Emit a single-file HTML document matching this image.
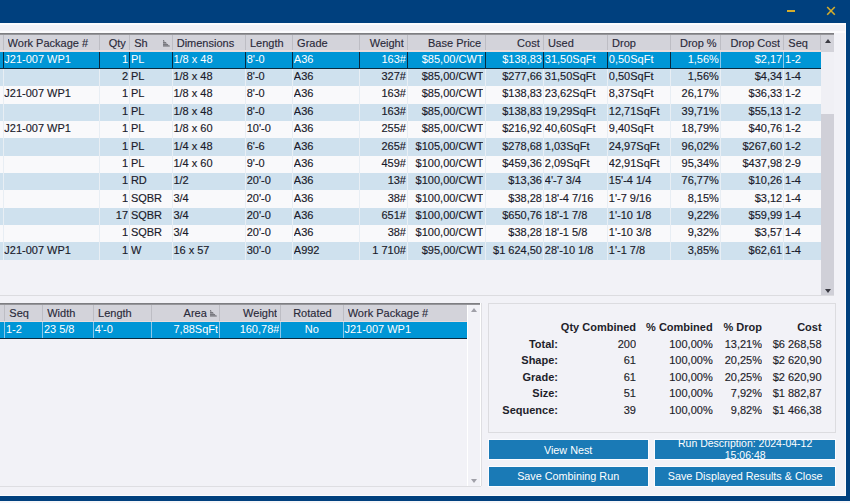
<!DOCTYPE html>
<html><head><meta charset="utf-8"><style>
html,body{margin:0;padding:0;}
body{width:850px;height:503px;position:relative;overflow:hidden;background:#f2f2f7;font-family:"Liberation Sans", sans-serif;}
.t{position:absolute;font-size:11px;line-height:14px;white-space:nowrap;overflow:hidden;-webkit-text-stroke:0.15px currentColor;}
.btn{position:absolute;background:#1a7ab6;color:#fff;font-size:10.8px;box-shadow:0 0 0 1px #fcfcff;text-align:center;overflow:hidden;box-sizing:border-box;}
</style></head><body>
<div style="position:absolute;left:0px;top:33px;width:834.3px;height:1px;background:#7e7e82"></div>
<div style="position:absolute;left:0px;top:34px;width:834.3px;height:1px;background:#959599"></div>
<div style="position:absolute;left:0px;top:35px;width:820.6px;height:16.6px;background:#d3d3da"></div>
<div style="position:absolute;left:0px;top:50.2px;width:820.6px;height:1.4px;background:#e8dcdc"></div>
<div style="position:absolute;left:2.5px;top:35px;width:1px;height:15.2px;background:#bdbdc4"></div>
<div style="position:absolute;left:98.9px;top:35px;width:1px;height:15.2px;background:#bdbdc4"></div>
<div style="position:absolute;left:129.1px;top:35px;width:1px;height:15.2px;background:#bdbdc4"></div>
<div style="position:absolute;left:171.6px;top:35px;width:1px;height:15.2px;background:#bdbdc4"></div>
<div style="position:absolute;left:244.9px;top:35px;width:1px;height:15.2px;background:#bdbdc4"></div>
<div style="position:absolute;left:292px;top:35px;width:1px;height:15.2px;background:#bdbdc4"></div>
<div style="position:absolute;left:358.9px;top:35px;width:1px;height:15.2px;background:#bdbdc4"></div>
<div style="position:absolute;left:407px;top:35px;width:1px;height:15.2px;background:#bdbdc4"></div>
<div style="position:absolute;left:484.5px;top:35px;width:1px;height:15.2px;background:#bdbdc4"></div>
<div style="position:absolute;left:543px;top:35px;width:1px;height:15.2px;background:#bdbdc4"></div>
<div style="position:absolute;left:607px;top:35px;width:1px;height:15.2px;background:#bdbdc4"></div>
<div style="position:absolute;left:669.9px;top:35px;width:1px;height:15.2px;background:#bdbdc4"></div>
<div style="position:absolute;left:719.9px;top:35px;width:1px;height:15.2px;background:#bdbdc4"></div>
<div style="position:absolute;left:783.25px;top:35px;width:1px;height:15.2px;background:#bdbdc4"></div>
<div style="position:absolute;left:820.1px;top:35px;width:1px;height:15.2px;background:#bdbdc4"></div>
<div class="t" style="left:-5.4px;top:35.9px;width:4.65px;text-align:left;color:#2a2a3a"></div>
<div class="t" style="left:7.6px;top:35.9px;width:88.05px;text-align:left;color:#2a2a3a">Work Package #</div>
<div class="t" style="left:104px;top:35.9px;width:21.85px;text-align:right;color:#2a2a3a">Qty</div>
<div class="t" style="left:134.2px;top:35.9px;width:34.15px;text-align:left;color:#2a2a3a">Sh</div>
<div class="t" style="left:176.7px;top:35.9px;width:64.95px;text-align:left;color:#2a2a3a">Dimensions</div>
<div class="t" style="left:250px;top:35.9px;width:38.75px;text-align:left;color:#2a2a3a">Length</div>
<div class="t" style="left:297.1px;top:35.9px;width:58.55px;text-align:left;color:#2a2a3a">Grade</div>
<div class="t" style="left:364px;top:35.9px;width:39.75px;text-align:right;color:#2a2a3a">Weight</div>
<div class="t" style="left:412.1px;top:35.9px;width:69.15px;text-align:right;color:#2a2a3a">Base Price</div>
<div class="t" style="left:489.6px;top:35.9px;width:50.15px;text-align:right;color:#2a2a3a">Cost</div>
<div class="t" style="left:548.1px;top:35.9px;width:55.65px;text-align:left;color:#2a2a3a">Used</div>
<div class="t" style="left:612.1px;top:35.9px;width:54.55px;text-align:left;color:#2a2a3a">Drop</div>
<div class="t" style="left:675px;top:35.9px;width:41.65px;text-align:right;color:#2a2a3a">Drop %</div>
<div class="t" style="left:725px;top:35.9px;width:55px;text-align:right;color:#2a2a3a">Drop Cost</div>
<div class="t" style="left:788.35px;top:35.9px;width:28.5px;text-align:left;color:#2a2a3a">Seq</div>
<div style="position:absolute;left:0px;top:51.6px;width:820.6px;height:17.34px;background:#0096d6"></div>
<div style="position:absolute;left:2.5px;top:51.6px;width:1px;height:17.34px;background:#0a2a40"></div>
<div style="position:absolute;left:98.9px;top:51.6px;width:1px;height:17.34px;background:#0a2a40"></div>
<div style="position:absolute;left:129.1px;top:51.6px;width:1px;height:17.34px;background:#0a2a40"></div>
<div style="position:absolute;left:171.6px;top:51.6px;width:1px;height:17.34px;background:#0a2a40"></div>
<div style="position:absolute;left:244.9px;top:51.6px;width:1px;height:17.34px;background:#0a2a40"></div>
<div style="position:absolute;left:292px;top:51.6px;width:1px;height:17.34px;background:#0a2a40"></div>
<div style="position:absolute;left:358.9px;top:51.6px;width:1px;height:17.34px;background:#0a2a40"></div>
<div style="position:absolute;left:407px;top:51.6px;width:1px;height:17.34px;background:#0a2a40"></div>
<div style="position:absolute;left:484.5px;top:51.6px;width:1px;height:17.34px;background:#0a2a40"></div>
<div style="position:absolute;left:543px;top:51.6px;width:1px;height:17.34px;background:#0a2a40"></div>
<div style="position:absolute;left:607px;top:51.6px;width:1px;height:17.34px;background:#0a2a40"></div>
<div style="position:absolute;left:669.9px;top:51.6px;width:1px;height:17.34px;background:#0a2a40"></div>
<div style="position:absolute;left:719.9px;top:51.6px;width:1px;height:17.34px;background:#8cc8ea"></div>
<div style="position:absolute;left:783.25px;top:51.6px;width:1px;height:17.34px;background:#8cc8ea"></div>
<div style="position:absolute;left:0px;top:67.54px;width:820.6px;height:1.4px;background:#0a2a40"></div>
<div class="t" style="left:4.3px;top:51.8px;width:93.6px;text-align:left;color:#ffffff;-webkit-text-stroke:0">J21-007 WP1</div>
<div class="t" style="left:100.7px;top:51.8px;width:27.4px;text-align:right;color:#ffffff;-webkit-text-stroke:0">1</div>
<div class="t" style="left:130.9px;top:51.8px;width:39.7px;text-align:left;color:#ffffff;-webkit-text-stroke:0">PL</div>
<div class="t" style="left:173.4px;top:51.8px;width:70.5px;text-align:left;color:#ffffff;-webkit-text-stroke:0">1/8 x 48</div>
<div class="t" style="left:246.7px;top:51.8px;width:44.3px;text-align:left;color:#ffffff;-webkit-text-stroke:0">8'-0</div>
<div class="t" style="left:293.8px;top:51.8px;width:64.1px;text-align:left;color:#ffffff;-webkit-text-stroke:0">A36</div>
<div class="t" style="left:360.7px;top:51.8px;width:45.3px;text-align:right;color:#ffffff;-webkit-text-stroke:0">163#</div>
<div class="t" style="left:408.8px;top:51.8px;width:74.7px;text-align:right;color:#ffffff;-webkit-text-stroke:0">$85,00/CWT</div>
<div class="t" style="left:486.3px;top:51.8px;width:55.7px;text-align:right;color:#ffffff;-webkit-text-stroke:0">$138,83</div>
<div class="t" style="left:544.8px;top:51.8px;width:61.2px;text-align:left;color:#ffffff;-webkit-text-stroke:0">31,50SqFt</div>
<div class="t" style="left:608.8px;top:51.8px;width:60.1px;text-align:left;color:#ffffff;-webkit-text-stroke:0">0,50SqFt</div>
<div class="t" style="left:671.7px;top:51.8px;width:47.2px;text-align:right;color:#ffffff;-webkit-text-stroke:0">1,56%</div>
<div class="t" style="left:721.7px;top:51.8px;width:60.55px;text-align:right;color:#ffffff;-webkit-text-stroke:0">$2,17</div>
<div class="t" style="left:785.05px;top:51.8px;width:34.05px;text-align:left;color:#ffffff;-webkit-text-stroke:0">1-2</div>
<div style="position:absolute;left:0px;top:68.94px;width:820.6px;height:17.34px;background:#cfe1ee"></div>
<div style="position:absolute;left:2.5px;top:68.94px;width:1px;height:17.34px;background:#e8eef4"></div>
<div style="position:absolute;left:98.9px;top:68.94px;width:1px;height:17.34px;background:#e8eef4"></div>
<div style="position:absolute;left:129.1px;top:68.94px;width:1px;height:17.34px;background:#e8eef4"></div>
<div style="position:absolute;left:171.6px;top:68.94px;width:1px;height:17.34px;background:#e8eef4"></div>
<div style="position:absolute;left:244.9px;top:68.94px;width:1px;height:17.34px;background:#e8eef4"></div>
<div style="position:absolute;left:292px;top:68.94px;width:1px;height:17.34px;background:#e8eef4"></div>
<div style="position:absolute;left:358.9px;top:68.94px;width:1px;height:17.34px;background:#e8eef4"></div>
<div style="position:absolute;left:407px;top:68.94px;width:1px;height:17.34px;background:#e8eef4"></div>
<div style="position:absolute;left:484.5px;top:68.94px;width:1px;height:17.34px;background:#e8eef4"></div>
<div style="position:absolute;left:543px;top:68.94px;width:1px;height:17.34px;background:#e8eef4"></div>
<div style="position:absolute;left:607px;top:68.94px;width:1px;height:17.34px;background:#e8eef4"></div>
<div style="position:absolute;left:669.9px;top:68.94px;width:1px;height:17.34px;background:#e8eef4"></div>
<div style="position:absolute;left:719.9px;top:68.94px;width:1px;height:17.34px;background:#e8eef4"></div>
<div style="position:absolute;left:783.25px;top:68.94px;width:1px;height:17.34px;background:#e8eef4"></div>
<div class="t" style="left:100.7px;top:69.14px;width:27.4px;text-align:right;color:#1a1a2a">2</div>
<div class="t" style="left:130.9px;top:69.14px;width:39.7px;text-align:left;color:#1a1a2a">PL</div>
<div class="t" style="left:173.4px;top:69.14px;width:70.5px;text-align:left;color:#1a1a2a">1/8 x 48</div>
<div class="t" style="left:246.7px;top:69.14px;width:44.3px;text-align:left;color:#1a1a2a">8'-0</div>
<div class="t" style="left:293.8px;top:69.14px;width:64.1px;text-align:left;color:#1a1a2a">A36</div>
<div class="t" style="left:360.7px;top:69.14px;width:45.3px;text-align:right;color:#1a1a2a">327#</div>
<div class="t" style="left:408.8px;top:69.14px;width:74.7px;text-align:right;color:#1a1a2a">$85,00/CWT</div>
<div class="t" style="left:486.3px;top:69.14px;width:55.7px;text-align:right;color:#1a1a2a">$277,66</div>
<div class="t" style="left:544.8px;top:69.14px;width:61.2px;text-align:left;color:#1a1a2a">31,50SqFt</div>
<div class="t" style="left:608.8px;top:69.14px;width:60.1px;text-align:left;color:#1a1a2a">0,50SqFt</div>
<div class="t" style="left:671.7px;top:69.14px;width:47.2px;text-align:right;color:#1a1a2a">1,56%</div>
<div class="t" style="left:721.7px;top:69.14px;width:60.55px;text-align:right;color:#1a1a2a">$4,34</div>
<div class="t" style="left:785.05px;top:69.14px;width:34.05px;text-align:left;color:#1a1a2a">1-4</div>
<div style="position:absolute;left:0px;top:86.28px;width:820.6px;height:17.34px;background:#f9f9fb"></div>
<div style="position:absolute;left:2.5px;top:86.28px;width:1px;height:17.34px;background:#e8eef4"></div>
<div style="position:absolute;left:98.9px;top:86.28px;width:1px;height:17.34px;background:#e8eef4"></div>
<div style="position:absolute;left:129.1px;top:86.28px;width:1px;height:17.34px;background:#e8eef4"></div>
<div style="position:absolute;left:171.6px;top:86.28px;width:1px;height:17.34px;background:#e8eef4"></div>
<div style="position:absolute;left:244.9px;top:86.28px;width:1px;height:17.34px;background:#e8eef4"></div>
<div style="position:absolute;left:292px;top:86.28px;width:1px;height:17.34px;background:#e8eef4"></div>
<div style="position:absolute;left:358.9px;top:86.28px;width:1px;height:17.34px;background:#e8eef4"></div>
<div style="position:absolute;left:407px;top:86.28px;width:1px;height:17.34px;background:#e8eef4"></div>
<div style="position:absolute;left:484.5px;top:86.28px;width:1px;height:17.34px;background:#e8eef4"></div>
<div style="position:absolute;left:543px;top:86.28px;width:1px;height:17.34px;background:#e8eef4"></div>
<div style="position:absolute;left:607px;top:86.28px;width:1px;height:17.34px;background:#e8eef4"></div>
<div style="position:absolute;left:669.9px;top:86.28px;width:1px;height:17.34px;background:#e8eef4"></div>
<div style="position:absolute;left:719.9px;top:86.28px;width:1px;height:17.34px;background:#e8eef4"></div>
<div style="position:absolute;left:783.25px;top:86.28px;width:1px;height:17.34px;background:#e8eef4"></div>
<div class="t" style="left:4.3px;top:86.48px;width:93.6px;text-align:left;color:#1a1a2a">J21-007 WP1</div>
<div class="t" style="left:100.7px;top:86.48px;width:27.4px;text-align:right;color:#1a1a2a">1</div>
<div class="t" style="left:130.9px;top:86.48px;width:39.7px;text-align:left;color:#1a1a2a">PL</div>
<div class="t" style="left:173.4px;top:86.48px;width:70.5px;text-align:left;color:#1a1a2a">1/8 x 48</div>
<div class="t" style="left:246.7px;top:86.48px;width:44.3px;text-align:left;color:#1a1a2a">8'-0</div>
<div class="t" style="left:293.8px;top:86.48px;width:64.1px;text-align:left;color:#1a1a2a">A36</div>
<div class="t" style="left:360.7px;top:86.48px;width:45.3px;text-align:right;color:#1a1a2a">163#</div>
<div class="t" style="left:408.8px;top:86.48px;width:74.7px;text-align:right;color:#1a1a2a">$85,00/CWT</div>
<div class="t" style="left:486.3px;top:86.48px;width:55.7px;text-align:right;color:#1a1a2a">$138,83</div>
<div class="t" style="left:544.8px;top:86.48px;width:61.2px;text-align:left;color:#1a1a2a">23,62SqFt</div>
<div class="t" style="left:608.8px;top:86.48px;width:60.1px;text-align:left;color:#1a1a2a">8,37SqFt</div>
<div class="t" style="left:671.7px;top:86.48px;width:47.2px;text-align:right;color:#1a1a2a">26,17%</div>
<div class="t" style="left:721.7px;top:86.48px;width:60.55px;text-align:right;color:#1a1a2a">$36,33</div>
<div class="t" style="left:785.05px;top:86.48px;width:34.05px;text-align:left;color:#1a1a2a">1-2</div>
<div style="position:absolute;left:0px;top:103.62px;width:820.6px;height:17.34px;background:#cfe1ee"></div>
<div style="position:absolute;left:2.5px;top:103.62px;width:1px;height:17.34px;background:#e8eef4"></div>
<div style="position:absolute;left:98.9px;top:103.62px;width:1px;height:17.34px;background:#e8eef4"></div>
<div style="position:absolute;left:129.1px;top:103.62px;width:1px;height:17.34px;background:#e8eef4"></div>
<div style="position:absolute;left:171.6px;top:103.62px;width:1px;height:17.34px;background:#e8eef4"></div>
<div style="position:absolute;left:244.9px;top:103.62px;width:1px;height:17.34px;background:#e8eef4"></div>
<div style="position:absolute;left:292px;top:103.62px;width:1px;height:17.34px;background:#e8eef4"></div>
<div style="position:absolute;left:358.9px;top:103.62px;width:1px;height:17.34px;background:#e8eef4"></div>
<div style="position:absolute;left:407px;top:103.62px;width:1px;height:17.34px;background:#e8eef4"></div>
<div style="position:absolute;left:484.5px;top:103.62px;width:1px;height:17.34px;background:#e8eef4"></div>
<div style="position:absolute;left:543px;top:103.62px;width:1px;height:17.34px;background:#e8eef4"></div>
<div style="position:absolute;left:607px;top:103.62px;width:1px;height:17.34px;background:#e8eef4"></div>
<div style="position:absolute;left:669.9px;top:103.62px;width:1px;height:17.34px;background:#e8eef4"></div>
<div style="position:absolute;left:719.9px;top:103.62px;width:1px;height:17.34px;background:#e8eef4"></div>
<div style="position:absolute;left:783.25px;top:103.62px;width:1px;height:17.34px;background:#e8eef4"></div>
<div class="t" style="left:100.7px;top:103.82px;width:27.4px;text-align:right;color:#1a1a2a">1</div>
<div class="t" style="left:130.9px;top:103.82px;width:39.7px;text-align:left;color:#1a1a2a">PL</div>
<div class="t" style="left:173.4px;top:103.82px;width:70.5px;text-align:left;color:#1a1a2a">1/8 x 48</div>
<div class="t" style="left:246.7px;top:103.82px;width:44.3px;text-align:left;color:#1a1a2a">8'-0</div>
<div class="t" style="left:293.8px;top:103.82px;width:64.1px;text-align:left;color:#1a1a2a">A36</div>
<div class="t" style="left:360.7px;top:103.82px;width:45.3px;text-align:right;color:#1a1a2a">163#</div>
<div class="t" style="left:408.8px;top:103.82px;width:74.7px;text-align:right;color:#1a1a2a">$85,00/CWT</div>
<div class="t" style="left:486.3px;top:103.82px;width:55.7px;text-align:right;color:#1a1a2a">$138,83</div>
<div class="t" style="left:544.8px;top:103.82px;width:61.2px;text-align:left;color:#1a1a2a">19,29SqFt</div>
<div class="t" style="left:608.8px;top:103.82px;width:60.1px;text-align:left;color:#1a1a2a">12,71SqFt</div>
<div class="t" style="left:671.7px;top:103.82px;width:47.2px;text-align:right;color:#1a1a2a">39,71%</div>
<div class="t" style="left:721.7px;top:103.82px;width:60.55px;text-align:right;color:#1a1a2a">$55,13</div>
<div class="t" style="left:785.05px;top:103.82px;width:34.05px;text-align:left;color:#1a1a2a">1-2</div>
<div style="position:absolute;left:0px;top:120.96px;width:820.6px;height:17.34px;background:#f9f9fb"></div>
<div style="position:absolute;left:2.5px;top:120.96px;width:1px;height:17.34px;background:#e8eef4"></div>
<div style="position:absolute;left:98.9px;top:120.96px;width:1px;height:17.34px;background:#e8eef4"></div>
<div style="position:absolute;left:129.1px;top:120.96px;width:1px;height:17.34px;background:#e8eef4"></div>
<div style="position:absolute;left:171.6px;top:120.96px;width:1px;height:17.34px;background:#e8eef4"></div>
<div style="position:absolute;left:244.9px;top:120.96px;width:1px;height:17.34px;background:#e8eef4"></div>
<div style="position:absolute;left:292px;top:120.96px;width:1px;height:17.34px;background:#e8eef4"></div>
<div style="position:absolute;left:358.9px;top:120.96px;width:1px;height:17.34px;background:#e8eef4"></div>
<div style="position:absolute;left:407px;top:120.96px;width:1px;height:17.34px;background:#e8eef4"></div>
<div style="position:absolute;left:484.5px;top:120.96px;width:1px;height:17.34px;background:#e8eef4"></div>
<div style="position:absolute;left:543px;top:120.96px;width:1px;height:17.34px;background:#e8eef4"></div>
<div style="position:absolute;left:607px;top:120.96px;width:1px;height:17.34px;background:#e8eef4"></div>
<div style="position:absolute;left:669.9px;top:120.96px;width:1px;height:17.34px;background:#e8eef4"></div>
<div style="position:absolute;left:719.9px;top:120.96px;width:1px;height:17.34px;background:#e8eef4"></div>
<div style="position:absolute;left:783.25px;top:120.96px;width:1px;height:17.34px;background:#e8eef4"></div>
<div class="t" style="left:4.3px;top:121.16px;width:93.6px;text-align:left;color:#1a1a2a">J21-007 WP1</div>
<div class="t" style="left:100.7px;top:121.16px;width:27.4px;text-align:right;color:#1a1a2a">1</div>
<div class="t" style="left:130.9px;top:121.16px;width:39.7px;text-align:left;color:#1a1a2a">PL</div>
<div class="t" style="left:173.4px;top:121.16px;width:70.5px;text-align:left;color:#1a1a2a">1/8 x 60</div>
<div class="t" style="left:246.7px;top:121.16px;width:44.3px;text-align:left;color:#1a1a2a">10'-0</div>
<div class="t" style="left:293.8px;top:121.16px;width:64.1px;text-align:left;color:#1a1a2a">A36</div>
<div class="t" style="left:360.7px;top:121.16px;width:45.3px;text-align:right;color:#1a1a2a">255#</div>
<div class="t" style="left:408.8px;top:121.16px;width:74.7px;text-align:right;color:#1a1a2a">$85,00/CWT</div>
<div class="t" style="left:486.3px;top:121.16px;width:55.7px;text-align:right;color:#1a1a2a">$216,92</div>
<div class="t" style="left:544.8px;top:121.16px;width:61.2px;text-align:left;color:#1a1a2a">40,60SqFt</div>
<div class="t" style="left:608.8px;top:121.16px;width:60.1px;text-align:left;color:#1a1a2a">9,40SqFt</div>
<div class="t" style="left:671.7px;top:121.16px;width:47.2px;text-align:right;color:#1a1a2a">18,79%</div>
<div class="t" style="left:721.7px;top:121.16px;width:60.55px;text-align:right;color:#1a1a2a">$40,76</div>
<div class="t" style="left:785.05px;top:121.16px;width:34.05px;text-align:left;color:#1a1a2a">1-2</div>
<div style="position:absolute;left:0px;top:138.3px;width:820.6px;height:17.34px;background:#cfe1ee"></div>
<div style="position:absolute;left:2.5px;top:138.3px;width:1px;height:17.34px;background:#e8eef4"></div>
<div style="position:absolute;left:98.9px;top:138.3px;width:1px;height:17.34px;background:#e8eef4"></div>
<div style="position:absolute;left:129.1px;top:138.3px;width:1px;height:17.34px;background:#e8eef4"></div>
<div style="position:absolute;left:171.6px;top:138.3px;width:1px;height:17.34px;background:#e8eef4"></div>
<div style="position:absolute;left:244.9px;top:138.3px;width:1px;height:17.34px;background:#e8eef4"></div>
<div style="position:absolute;left:292px;top:138.3px;width:1px;height:17.34px;background:#e8eef4"></div>
<div style="position:absolute;left:358.9px;top:138.3px;width:1px;height:17.34px;background:#e8eef4"></div>
<div style="position:absolute;left:407px;top:138.3px;width:1px;height:17.34px;background:#e8eef4"></div>
<div style="position:absolute;left:484.5px;top:138.3px;width:1px;height:17.34px;background:#e8eef4"></div>
<div style="position:absolute;left:543px;top:138.3px;width:1px;height:17.34px;background:#e8eef4"></div>
<div style="position:absolute;left:607px;top:138.3px;width:1px;height:17.34px;background:#e8eef4"></div>
<div style="position:absolute;left:669.9px;top:138.3px;width:1px;height:17.34px;background:#e8eef4"></div>
<div style="position:absolute;left:719.9px;top:138.3px;width:1px;height:17.34px;background:#e8eef4"></div>
<div style="position:absolute;left:783.25px;top:138.3px;width:1px;height:17.34px;background:#e8eef4"></div>
<div class="t" style="left:100.7px;top:138.5px;width:27.4px;text-align:right;color:#1a1a2a">1</div>
<div class="t" style="left:130.9px;top:138.5px;width:39.7px;text-align:left;color:#1a1a2a">PL</div>
<div class="t" style="left:173.4px;top:138.5px;width:70.5px;text-align:left;color:#1a1a2a">1/4 x 48</div>
<div class="t" style="left:246.7px;top:138.5px;width:44.3px;text-align:left;color:#1a1a2a">6'-6</div>
<div class="t" style="left:293.8px;top:138.5px;width:64.1px;text-align:left;color:#1a1a2a">A36</div>
<div class="t" style="left:360.7px;top:138.5px;width:45.3px;text-align:right;color:#1a1a2a">265#</div>
<div class="t" style="left:408.8px;top:138.5px;width:74.7px;text-align:right;color:#1a1a2a">$105,00/CWT</div>
<div class="t" style="left:486.3px;top:138.5px;width:55.7px;text-align:right;color:#1a1a2a">$278,68</div>
<div class="t" style="left:544.8px;top:138.5px;width:61.2px;text-align:left;color:#1a1a2a">1,03SqFt</div>
<div class="t" style="left:608.8px;top:138.5px;width:60.1px;text-align:left;color:#1a1a2a">24,97SqFt</div>
<div class="t" style="left:671.7px;top:138.5px;width:47.2px;text-align:right;color:#1a1a2a">96,02%</div>
<div class="t" style="left:721.7px;top:138.5px;width:60.55px;text-align:right;color:#1a1a2a">$267,60</div>
<div class="t" style="left:785.05px;top:138.5px;width:34.05px;text-align:left;color:#1a1a2a">1-2</div>
<div style="position:absolute;left:0px;top:155.64px;width:820.6px;height:17.34px;background:#f9f9fb"></div>
<div style="position:absolute;left:2.5px;top:155.64px;width:1px;height:17.34px;background:#e8eef4"></div>
<div style="position:absolute;left:98.9px;top:155.64px;width:1px;height:17.34px;background:#e8eef4"></div>
<div style="position:absolute;left:129.1px;top:155.64px;width:1px;height:17.34px;background:#e8eef4"></div>
<div style="position:absolute;left:171.6px;top:155.64px;width:1px;height:17.34px;background:#e8eef4"></div>
<div style="position:absolute;left:244.9px;top:155.64px;width:1px;height:17.34px;background:#e8eef4"></div>
<div style="position:absolute;left:292px;top:155.64px;width:1px;height:17.34px;background:#e8eef4"></div>
<div style="position:absolute;left:358.9px;top:155.64px;width:1px;height:17.34px;background:#e8eef4"></div>
<div style="position:absolute;left:407px;top:155.64px;width:1px;height:17.34px;background:#e8eef4"></div>
<div style="position:absolute;left:484.5px;top:155.64px;width:1px;height:17.34px;background:#e8eef4"></div>
<div style="position:absolute;left:543px;top:155.64px;width:1px;height:17.34px;background:#e8eef4"></div>
<div style="position:absolute;left:607px;top:155.64px;width:1px;height:17.34px;background:#e8eef4"></div>
<div style="position:absolute;left:669.9px;top:155.64px;width:1px;height:17.34px;background:#e8eef4"></div>
<div style="position:absolute;left:719.9px;top:155.64px;width:1px;height:17.34px;background:#e8eef4"></div>
<div style="position:absolute;left:783.25px;top:155.64px;width:1px;height:17.34px;background:#e8eef4"></div>
<div class="t" style="left:100.7px;top:155.84px;width:27.4px;text-align:right;color:#1a1a2a">1</div>
<div class="t" style="left:130.9px;top:155.84px;width:39.7px;text-align:left;color:#1a1a2a">PL</div>
<div class="t" style="left:173.4px;top:155.84px;width:70.5px;text-align:left;color:#1a1a2a">1/4 x 60</div>
<div class="t" style="left:246.7px;top:155.84px;width:44.3px;text-align:left;color:#1a1a2a">9'-0</div>
<div class="t" style="left:293.8px;top:155.84px;width:64.1px;text-align:left;color:#1a1a2a">A36</div>
<div class="t" style="left:360.7px;top:155.84px;width:45.3px;text-align:right;color:#1a1a2a">459#</div>
<div class="t" style="left:408.8px;top:155.84px;width:74.7px;text-align:right;color:#1a1a2a">$100,00/CWT</div>
<div class="t" style="left:486.3px;top:155.84px;width:55.7px;text-align:right;color:#1a1a2a">$459,36</div>
<div class="t" style="left:544.8px;top:155.84px;width:61.2px;text-align:left;color:#1a1a2a">2,09SqFt</div>
<div class="t" style="left:608.8px;top:155.84px;width:60.1px;text-align:left;color:#1a1a2a">42,91SqFt</div>
<div class="t" style="left:671.7px;top:155.84px;width:47.2px;text-align:right;color:#1a1a2a">95,34%</div>
<div class="t" style="left:721.7px;top:155.84px;width:60.55px;text-align:right;color:#1a1a2a">$437,98</div>
<div class="t" style="left:785.05px;top:155.84px;width:34.05px;text-align:left;color:#1a1a2a">2-9</div>
<div style="position:absolute;left:0px;top:172.98px;width:820.6px;height:17.34px;background:#cfe1ee"></div>
<div style="position:absolute;left:2.5px;top:172.98px;width:1px;height:17.34px;background:#e8eef4"></div>
<div style="position:absolute;left:98.9px;top:172.98px;width:1px;height:17.34px;background:#e8eef4"></div>
<div style="position:absolute;left:129.1px;top:172.98px;width:1px;height:17.34px;background:#e8eef4"></div>
<div style="position:absolute;left:171.6px;top:172.98px;width:1px;height:17.34px;background:#e8eef4"></div>
<div style="position:absolute;left:244.9px;top:172.98px;width:1px;height:17.34px;background:#e8eef4"></div>
<div style="position:absolute;left:292px;top:172.98px;width:1px;height:17.34px;background:#e8eef4"></div>
<div style="position:absolute;left:358.9px;top:172.98px;width:1px;height:17.34px;background:#e8eef4"></div>
<div style="position:absolute;left:407px;top:172.98px;width:1px;height:17.34px;background:#e8eef4"></div>
<div style="position:absolute;left:484.5px;top:172.98px;width:1px;height:17.34px;background:#e8eef4"></div>
<div style="position:absolute;left:543px;top:172.98px;width:1px;height:17.34px;background:#e8eef4"></div>
<div style="position:absolute;left:607px;top:172.98px;width:1px;height:17.34px;background:#e8eef4"></div>
<div style="position:absolute;left:669.9px;top:172.98px;width:1px;height:17.34px;background:#e8eef4"></div>
<div style="position:absolute;left:719.9px;top:172.98px;width:1px;height:17.34px;background:#e8eef4"></div>
<div style="position:absolute;left:783.25px;top:172.98px;width:1px;height:17.34px;background:#e8eef4"></div>
<div class="t" style="left:100.7px;top:173.18px;width:27.4px;text-align:right;color:#1a1a2a">1</div>
<div class="t" style="left:130.9px;top:173.18px;width:39.7px;text-align:left;color:#1a1a2a">RD</div>
<div class="t" style="left:173.4px;top:173.18px;width:70.5px;text-align:left;color:#1a1a2a">1/2</div>
<div class="t" style="left:246.7px;top:173.18px;width:44.3px;text-align:left;color:#1a1a2a">20'-0</div>
<div class="t" style="left:293.8px;top:173.18px;width:64.1px;text-align:left;color:#1a1a2a">A36</div>
<div class="t" style="left:360.7px;top:173.18px;width:45.3px;text-align:right;color:#1a1a2a">13#</div>
<div class="t" style="left:408.8px;top:173.18px;width:74.7px;text-align:right;color:#1a1a2a">$100,00/CWT</div>
<div class="t" style="left:486.3px;top:173.18px;width:55.7px;text-align:right;color:#1a1a2a">$13,36</div>
<div class="t" style="left:544.8px;top:173.18px;width:61.2px;text-align:left;color:#1a1a2a">4'-7 3/4</div>
<div class="t" style="left:608.8px;top:173.18px;width:60.1px;text-align:left;color:#1a1a2a">15'-4 1/4</div>
<div class="t" style="left:671.7px;top:173.18px;width:47.2px;text-align:right;color:#1a1a2a">76,77%</div>
<div class="t" style="left:721.7px;top:173.18px;width:60.55px;text-align:right;color:#1a1a2a">$10,26</div>
<div class="t" style="left:785.05px;top:173.18px;width:34.05px;text-align:left;color:#1a1a2a">1-4</div>
<div style="position:absolute;left:0px;top:190.32px;width:820.6px;height:17.34px;background:#f9f9fb"></div>
<div style="position:absolute;left:2.5px;top:190.32px;width:1px;height:17.34px;background:#e8eef4"></div>
<div style="position:absolute;left:98.9px;top:190.32px;width:1px;height:17.34px;background:#e8eef4"></div>
<div style="position:absolute;left:129.1px;top:190.32px;width:1px;height:17.34px;background:#e8eef4"></div>
<div style="position:absolute;left:171.6px;top:190.32px;width:1px;height:17.34px;background:#e8eef4"></div>
<div style="position:absolute;left:244.9px;top:190.32px;width:1px;height:17.34px;background:#e8eef4"></div>
<div style="position:absolute;left:292px;top:190.32px;width:1px;height:17.34px;background:#e8eef4"></div>
<div style="position:absolute;left:358.9px;top:190.32px;width:1px;height:17.34px;background:#e8eef4"></div>
<div style="position:absolute;left:407px;top:190.32px;width:1px;height:17.34px;background:#e8eef4"></div>
<div style="position:absolute;left:484.5px;top:190.32px;width:1px;height:17.34px;background:#e8eef4"></div>
<div style="position:absolute;left:543px;top:190.32px;width:1px;height:17.34px;background:#e8eef4"></div>
<div style="position:absolute;left:607px;top:190.32px;width:1px;height:17.34px;background:#e8eef4"></div>
<div style="position:absolute;left:669.9px;top:190.32px;width:1px;height:17.34px;background:#e8eef4"></div>
<div style="position:absolute;left:719.9px;top:190.32px;width:1px;height:17.34px;background:#e8eef4"></div>
<div style="position:absolute;left:783.25px;top:190.32px;width:1px;height:17.34px;background:#e8eef4"></div>
<div class="t" style="left:100.7px;top:190.52px;width:27.4px;text-align:right;color:#1a1a2a">1</div>
<div class="t" style="left:130.9px;top:190.52px;width:39.7px;text-align:left;color:#1a1a2a">SQBR</div>
<div class="t" style="left:173.4px;top:190.52px;width:70.5px;text-align:left;color:#1a1a2a">3/4</div>
<div class="t" style="left:246.7px;top:190.52px;width:44.3px;text-align:left;color:#1a1a2a">20'-0</div>
<div class="t" style="left:293.8px;top:190.52px;width:64.1px;text-align:left;color:#1a1a2a">A36</div>
<div class="t" style="left:360.7px;top:190.52px;width:45.3px;text-align:right;color:#1a1a2a">38#</div>
<div class="t" style="left:408.8px;top:190.52px;width:74.7px;text-align:right;color:#1a1a2a">$100,00/CWT</div>
<div class="t" style="left:486.3px;top:190.52px;width:55.7px;text-align:right;color:#1a1a2a">$38,28</div>
<div class="t" style="left:544.8px;top:190.52px;width:61.2px;text-align:left;color:#1a1a2a">18'-4 7/16</div>
<div class="t" style="left:608.8px;top:190.52px;width:60.1px;text-align:left;color:#1a1a2a">1'-7 9/16</div>
<div class="t" style="left:671.7px;top:190.52px;width:47.2px;text-align:right;color:#1a1a2a">8,15%</div>
<div class="t" style="left:721.7px;top:190.52px;width:60.55px;text-align:right;color:#1a1a2a">$3,12</div>
<div class="t" style="left:785.05px;top:190.52px;width:34.05px;text-align:left;color:#1a1a2a">1-4</div>
<div style="position:absolute;left:0px;top:207.66px;width:820.6px;height:17.34px;background:#cfe1ee"></div>
<div style="position:absolute;left:2.5px;top:207.66px;width:1px;height:17.34px;background:#e8eef4"></div>
<div style="position:absolute;left:98.9px;top:207.66px;width:1px;height:17.34px;background:#e8eef4"></div>
<div style="position:absolute;left:129.1px;top:207.66px;width:1px;height:17.34px;background:#e8eef4"></div>
<div style="position:absolute;left:171.6px;top:207.66px;width:1px;height:17.34px;background:#e8eef4"></div>
<div style="position:absolute;left:244.9px;top:207.66px;width:1px;height:17.34px;background:#e8eef4"></div>
<div style="position:absolute;left:292px;top:207.66px;width:1px;height:17.34px;background:#e8eef4"></div>
<div style="position:absolute;left:358.9px;top:207.66px;width:1px;height:17.34px;background:#e8eef4"></div>
<div style="position:absolute;left:407px;top:207.66px;width:1px;height:17.34px;background:#e8eef4"></div>
<div style="position:absolute;left:484.5px;top:207.66px;width:1px;height:17.34px;background:#e8eef4"></div>
<div style="position:absolute;left:543px;top:207.66px;width:1px;height:17.34px;background:#e8eef4"></div>
<div style="position:absolute;left:607px;top:207.66px;width:1px;height:17.34px;background:#e8eef4"></div>
<div style="position:absolute;left:669.9px;top:207.66px;width:1px;height:17.34px;background:#e8eef4"></div>
<div style="position:absolute;left:719.9px;top:207.66px;width:1px;height:17.34px;background:#e8eef4"></div>
<div style="position:absolute;left:783.25px;top:207.66px;width:1px;height:17.34px;background:#e8eef4"></div>
<div class="t" style="left:100.7px;top:207.86px;width:27.4px;text-align:right;color:#1a1a2a">17</div>
<div class="t" style="left:130.9px;top:207.86px;width:39.7px;text-align:left;color:#1a1a2a">SQBR</div>
<div class="t" style="left:173.4px;top:207.86px;width:70.5px;text-align:left;color:#1a1a2a">3/4</div>
<div class="t" style="left:246.7px;top:207.86px;width:44.3px;text-align:left;color:#1a1a2a">20'-0</div>
<div class="t" style="left:293.8px;top:207.86px;width:64.1px;text-align:left;color:#1a1a2a">A36</div>
<div class="t" style="left:360.7px;top:207.86px;width:45.3px;text-align:right;color:#1a1a2a">651#</div>
<div class="t" style="left:408.8px;top:207.86px;width:74.7px;text-align:right;color:#1a1a2a">$100,00/CWT</div>
<div class="t" style="left:486.3px;top:207.86px;width:55.7px;text-align:right;color:#1a1a2a">$650,76</div>
<div class="t" style="left:544.8px;top:207.86px;width:61.2px;text-align:left;color:#1a1a2a">18'-1 7/8</div>
<div class="t" style="left:608.8px;top:207.86px;width:60.1px;text-align:left;color:#1a1a2a">1'-10 1/8</div>
<div class="t" style="left:671.7px;top:207.86px;width:47.2px;text-align:right;color:#1a1a2a">9,22%</div>
<div class="t" style="left:721.7px;top:207.86px;width:60.55px;text-align:right;color:#1a1a2a">$59,99</div>
<div class="t" style="left:785.05px;top:207.86px;width:34.05px;text-align:left;color:#1a1a2a">1-4</div>
<div style="position:absolute;left:0px;top:225px;width:820.6px;height:17.34px;background:#f9f9fb"></div>
<div style="position:absolute;left:2.5px;top:225px;width:1px;height:17.34px;background:#e8eef4"></div>
<div style="position:absolute;left:98.9px;top:225px;width:1px;height:17.34px;background:#e8eef4"></div>
<div style="position:absolute;left:129.1px;top:225px;width:1px;height:17.34px;background:#e8eef4"></div>
<div style="position:absolute;left:171.6px;top:225px;width:1px;height:17.34px;background:#e8eef4"></div>
<div style="position:absolute;left:244.9px;top:225px;width:1px;height:17.34px;background:#e8eef4"></div>
<div style="position:absolute;left:292px;top:225px;width:1px;height:17.34px;background:#e8eef4"></div>
<div style="position:absolute;left:358.9px;top:225px;width:1px;height:17.34px;background:#e8eef4"></div>
<div style="position:absolute;left:407px;top:225px;width:1px;height:17.34px;background:#e8eef4"></div>
<div style="position:absolute;left:484.5px;top:225px;width:1px;height:17.34px;background:#e8eef4"></div>
<div style="position:absolute;left:543px;top:225px;width:1px;height:17.34px;background:#e8eef4"></div>
<div style="position:absolute;left:607px;top:225px;width:1px;height:17.34px;background:#e8eef4"></div>
<div style="position:absolute;left:669.9px;top:225px;width:1px;height:17.34px;background:#e8eef4"></div>
<div style="position:absolute;left:719.9px;top:225px;width:1px;height:17.34px;background:#e8eef4"></div>
<div style="position:absolute;left:783.25px;top:225px;width:1px;height:17.34px;background:#e8eef4"></div>
<div class="t" style="left:100.7px;top:225.2px;width:27.4px;text-align:right;color:#1a1a2a">1</div>
<div class="t" style="left:130.9px;top:225.2px;width:39.7px;text-align:left;color:#1a1a2a">SQBR</div>
<div class="t" style="left:173.4px;top:225.2px;width:70.5px;text-align:left;color:#1a1a2a">3/4</div>
<div class="t" style="left:246.7px;top:225.2px;width:44.3px;text-align:left;color:#1a1a2a">20'-0</div>
<div class="t" style="left:293.8px;top:225.2px;width:64.1px;text-align:left;color:#1a1a2a">A36</div>
<div class="t" style="left:360.7px;top:225.2px;width:45.3px;text-align:right;color:#1a1a2a">38#</div>
<div class="t" style="left:408.8px;top:225.2px;width:74.7px;text-align:right;color:#1a1a2a">$100,00/CWT</div>
<div class="t" style="left:486.3px;top:225.2px;width:55.7px;text-align:right;color:#1a1a2a">$38,28</div>
<div class="t" style="left:544.8px;top:225.2px;width:61.2px;text-align:left;color:#1a1a2a">18'-1 5/8</div>
<div class="t" style="left:608.8px;top:225.2px;width:60.1px;text-align:left;color:#1a1a2a">1'-10 3/8</div>
<div class="t" style="left:671.7px;top:225.2px;width:47.2px;text-align:right;color:#1a1a2a">9,32%</div>
<div class="t" style="left:721.7px;top:225.2px;width:60.55px;text-align:right;color:#1a1a2a">$3,57</div>
<div class="t" style="left:785.05px;top:225.2px;width:34.05px;text-align:left;color:#1a1a2a">1-4</div>
<div style="position:absolute;left:0px;top:242.34px;width:820.6px;height:17.34px;background:#cfe1ee"></div>
<div style="position:absolute;left:2.5px;top:242.34px;width:1px;height:17.34px;background:#e8eef4"></div>
<div style="position:absolute;left:98.9px;top:242.34px;width:1px;height:17.34px;background:#e8eef4"></div>
<div style="position:absolute;left:129.1px;top:242.34px;width:1px;height:17.34px;background:#e8eef4"></div>
<div style="position:absolute;left:171.6px;top:242.34px;width:1px;height:17.34px;background:#e8eef4"></div>
<div style="position:absolute;left:244.9px;top:242.34px;width:1px;height:17.34px;background:#e8eef4"></div>
<div style="position:absolute;left:292px;top:242.34px;width:1px;height:17.34px;background:#e8eef4"></div>
<div style="position:absolute;left:358.9px;top:242.34px;width:1px;height:17.34px;background:#e8eef4"></div>
<div style="position:absolute;left:407px;top:242.34px;width:1px;height:17.34px;background:#e8eef4"></div>
<div style="position:absolute;left:484.5px;top:242.34px;width:1px;height:17.34px;background:#e8eef4"></div>
<div style="position:absolute;left:543px;top:242.34px;width:1px;height:17.34px;background:#e8eef4"></div>
<div style="position:absolute;left:607px;top:242.34px;width:1px;height:17.34px;background:#e8eef4"></div>
<div style="position:absolute;left:669.9px;top:242.34px;width:1px;height:17.34px;background:#e8eef4"></div>
<div style="position:absolute;left:719.9px;top:242.34px;width:1px;height:17.34px;background:#e8eef4"></div>
<div style="position:absolute;left:783.25px;top:242.34px;width:1px;height:17.34px;background:#e8eef4"></div>
<div class="t" style="left:4.3px;top:242.54px;width:93.6px;text-align:left;color:#1a1a2a">J21-007 WP1</div>
<div class="t" style="left:100.7px;top:242.54px;width:27.4px;text-align:right;color:#1a1a2a">1</div>
<div class="t" style="left:130.9px;top:242.54px;width:39.7px;text-align:left;color:#1a1a2a">W</div>
<div class="t" style="left:173.4px;top:242.54px;width:70.5px;text-align:left;color:#1a1a2a">16 x 57</div>
<div class="t" style="left:246.7px;top:242.54px;width:44.3px;text-align:left;color:#1a1a2a">30'-0</div>
<div class="t" style="left:293.8px;top:242.54px;width:64.1px;text-align:left;color:#1a1a2a">A992</div>
<div class="t" style="left:360.7px;top:242.54px;width:45.3px;text-align:right;color:#1a1a2a">1 710#</div>
<div class="t" style="left:408.8px;top:242.54px;width:74.7px;text-align:right;color:#1a1a2a">$95,00/CWT</div>
<div class="t" style="left:486.3px;top:242.54px;width:55.7px;text-align:right;color:#1a1a2a">$1 624,50</div>
<div class="t" style="left:544.8px;top:242.54px;width:61.2px;text-align:left;color:#1a1a2a">28'-10 1/8</div>
<div class="t" style="left:608.8px;top:242.54px;width:60.1px;text-align:left;color:#1a1a2a">1'-1 7/8</div>
<div class="t" style="left:671.7px;top:242.54px;width:47.2px;text-align:right;color:#1a1a2a">3,85%</div>
<div class="t" style="left:721.7px;top:242.54px;width:60.55px;text-align:right;color:#1a1a2a">$62,61</div>
<div class="t" style="left:785.05px;top:242.54px;width:34.05px;text-align:left;color:#1a1a2a">1-4</div>
<div style="position:absolute;left:820.6px;top:35px;width:13.7px;height:260px;background:#d0d0d8"></div>
<div style="position:absolute;left:820.6px;top:35px;width:13.7px;height:16.6px;background:#d3d3da"></div>
<div style="position:absolute;left:820.6px;top:51.6px;width:13.7px;height:62.2px;background:#f0f0f5"></div>
<div style="position:absolute;left:824.7px;top:38.8px;width:0;height:0;border-left:3px solid transparent;border-right:3px solid transparent;border-bottom:4px solid #3a3a42"></div>
<div style="position:absolute;left:824.7px;top:288.7px;width:0;height:0;border-left:3px solid transparent;border-right:3px solid transparent;border-top:4px solid #3a3a42"></div>
<div style="position:absolute;left:0px;top:295px;width:834.3px;height:1px;background:#dcdce0"></div>
<div style="position:absolute;left:0px;top:303px;width:481px;height:1px;background:#7e7e82"></div>
<div style="position:absolute;left:0px;top:304px;width:481px;height:1px;background:#959599"></div>
<div style="position:absolute;left:0px;top:305px;width:466.9px;height:16.9px;background:#d3d3da"></div>
<div style="position:absolute;left:0px;top:320.7px;width:466.9px;height:1.2px;background:#e8dcdc"></div>
<div style="position:absolute;left:4.2px;top:305px;width:1px;height:15.7px;background:#bdbdc4"></div>
<div style="position:absolute;left:42.1px;top:305px;width:1px;height:15.7px;background:#bdbdc4"></div>
<div style="position:absolute;left:93px;top:305px;width:1px;height:15.7px;background:#bdbdc4"></div>
<div style="position:absolute;left:150.5px;top:305px;width:1px;height:15.7px;background:#bdbdc4"></div>
<div style="position:absolute;left:219.1px;top:305px;width:1px;height:15.7px;background:#bdbdc4"></div>
<div style="position:absolute;left:280.4px;top:305px;width:1px;height:15.7px;background:#bdbdc4"></div>
<div style="position:absolute;left:342.6px;top:305px;width:1px;height:15.7px;background:#bdbdc4"></div>
<div class="t" style="left:-5.4px;top:305.9px;width:6.35px;text-align:left;color:#2a2a3a"></div>
<div class="t" style="left:9.3px;top:305.9px;width:29.55px;text-align:left;color:#2a2a3a">Seq</div>
<div class="t" style="left:47.2px;top:305.9px;width:42.55px;text-align:left;color:#2a2a3a">Width</div>
<div class="t" style="left:98.1px;top:305.9px;width:49.15px;text-align:left;color:#2a2a3a">Length</div>
<div class="t" style="left:155.6px;top:305.9px;width:51.25px;text-align:right;color:#2a2a3a">Area</div>
<div class="t" style="left:224.2px;top:305.9px;width:52.95px;text-align:right;color:#2a2a3a">Weight</div>
<div class="t" style="left:285.5px;top:305.9px;width:53.85px;text-align:center;color:#2a2a3a">Rotated</div>
<div class="t" style="left:347.7px;top:305.9px;width:115.45px;text-align:left;color:#2a2a3a">Work Package #</div>
<div style="position:absolute;left:0px;top:321.9px;width:466.9px;height:17.34px;background:#0096d6"></div>
<div style="position:absolute;left:4.2px;top:321.9px;width:1px;height:17.34px;background:#8cc8ea"></div>
<div style="position:absolute;left:42.1px;top:321.9px;width:1px;height:17.34px;background:#8cc8ea"></div>
<div style="position:absolute;left:93px;top:321.9px;width:1px;height:17.34px;background:#8cc8ea"></div>
<div style="position:absolute;left:150.5px;top:321.9px;width:1px;height:17.34px;background:#8cc8ea"></div>
<div style="position:absolute;left:219.1px;top:321.9px;width:1px;height:17.34px;background:#8cc8ea"></div>
<div style="position:absolute;left:280.4px;top:321.9px;width:1px;height:17.34px;background:#8cc8ea"></div>
<div style="position:absolute;left:342.6px;top:321.9px;width:1px;height:17.34px;background:#8cc8ea"></div>
<div style="position:absolute;left:0px;top:337.84px;width:466.9px;height:1.4px;background:#0a2a40"></div>
<div class="t" style="left:6px;top:321.7px;width:35.1px;text-align:left;color:#ffffff;-webkit-text-stroke:0">1-2</div>
<div class="t" style="left:43.9px;top:321.7px;width:48.1px;text-align:left;color:#ffffff;-webkit-text-stroke:0">23 5/8</div>
<div class="t" style="left:94.8px;top:321.7px;width:54.7px;text-align:left;color:#ffffff;-webkit-text-stroke:0">4'-0</div>
<div class="t" style="left:152.3px;top:321.7px;width:65.8px;text-align:right;color:#ffffff;-webkit-text-stroke:0">7,88SqFt</div>
<div class="t" style="left:220.9px;top:321.7px;width:58.5px;text-align:right;color:#ffffff;-webkit-text-stroke:0">160,78#</div>
<div class="t" style="left:282.2px;top:321.7px;width:59.4px;text-align:center;color:#ffffff;-webkit-text-stroke:0">No</div>
<div class="t" style="left:344.4px;top:321.7px;width:121px;text-align:left;color:#ffffff;-webkit-text-stroke:0">J21-007 WP1</div>
<div style="position:absolute;left:470.8px;top:308.4px;width:0;height:0;border-left:3px solid transparent;border-right:3px solid transparent;border-bottom:4.4px solid #a0a0a8"></div>
<div style="position:absolute;left:470.8px;top:478.5px;width:0;height:0;border-left:3px solid transparent;border-right:3px solid transparent;border-top:4.4px solid #a0a0a8"></div>
<div style="position:absolute;left:466.9px;top:305px;width:1px;height:180.6px;background:#ffffff"></div>
<div style="position:absolute;left:480px;top:302.8px;width:1px;height:183px;background:#ffffff"></div>
<div style="position:absolute;left:481px;top:302.8px;width:1px;height:183px;background:#dedee2"></div>
<div style="position:absolute;left:0px;top:485.6px;width:481px;height:1px;background:#dedee2"></div>
<div style="position:absolute;left:488.3px;top:303.3px;width:347.7px;height:129.7px;border:1px solid #dcdce0;box-sizing:border-box;background:#f2f2f7"></div>
<div class="t" style="left:516px;top:320.19px;width:120px;text-align:right;color:#1e1e2a;font-size:11px;font-weight:bold;-webkit-text-stroke:0;">Qty Combined</div>
<div class="t" style="left:592.7px;top:320.19px;width:120px;text-align:right;color:#1e1e2a;font-size:11px;font-weight:bold;-webkit-text-stroke:0;">% Combined</div>
<div class="t" style="left:642px;top:320.19px;width:120px;text-align:right;color:#1e1e2a;font-size:11px;font-weight:bold;-webkit-text-stroke:0;">% Drop</div>
<div class="t" style="left:701.6px;top:320.19px;width:120px;text-align:right;color:#1e1e2a;font-size:11px;font-weight:bold;-webkit-text-stroke:0;">Cost</div>
<div class="t" style="left:438px;top:336.79px;width:120px;text-align:right;color:#1e1e2a;font-size:11px;font-weight:bold;-webkit-text-stroke:0;">Total:</div>
<div class="t" style="left:516px;top:336.79px;width:120px;text-align:right;color:#1e1e2a;font-size:11px;">200</div>
<div class="t" style="left:592.7px;top:336.79px;width:120px;text-align:right;color:#1e1e2a;font-size:11px;">100,00%</div>
<div class="t" style="left:642px;top:336.79px;width:120px;text-align:right;color:#1e1e2a;font-size:11px;">13,21%</div>
<div class="t" style="left:701.6px;top:336.79px;width:120px;text-align:right;color:#1e1e2a;font-size:11px;">$6 268,58</div>
<div class="t" style="left:438px;top:353.39px;width:120px;text-align:right;color:#1e1e2a;font-size:11px;font-weight:bold;-webkit-text-stroke:0;">Shape:</div>
<div class="t" style="left:516px;top:353.39px;width:120px;text-align:right;color:#1e1e2a;font-size:11px;">61</div>
<div class="t" style="left:592.7px;top:353.39px;width:120px;text-align:right;color:#1e1e2a;font-size:11px;">100,00%</div>
<div class="t" style="left:642px;top:353.39px;width:120px;text-align:right;color:#1e1e2a;font-size:11px;">20,25%</div>
<div class="t" style="left:701.6px;top:353.39px;width:120px;text-align:right;color:#1e1e2a;font-size:11px;">$2 620,90</div>
<div class="t" style="left:438px;top:369.79px;width:120px;text-align:right;color:#1e1e2a;font-size:11px;font-weight:bold;-webkit-text-stroke:0;">Grade:</div>
<div class="t" style="left:516px;top:369.79px;width:120px;text-align:right;color:#1e1e2a;font-size:11px;">61</div>
<div class="t" style="left:592.7px;top:369.79px;width:120px;text-align:right;color:#1e1e2a;font-size:11px;">100,00%</div>
<div class="t" style="left:642px;top:369.79px;width:120px;text-align:right;color:#1e1e2a;font-size:11px;">20,25%</div>
<div class="t" style="left:701.6px;top:369.79px;width:120px;text-align:right;color:#1e1e2a;font-size:11px;">$2 620,90</div>
<div class="t" style="left:438px;top:386.19px;width:120px;text-align:right;color:#1e1e2a;font-size:11px;font-weight:bold;-webkit-text-stroke:0;">Size:</div>
<div class="t" style="left:516px;top:386.19px;width:120px;text-align:right;color:#1e1e2a;font-size:11px;">51</div>
<div class="t" style="left:592.7px;top:386.19px;width:120px;text-align:right;color:#1e1e2a;font-size:11px;">100,00%</div>
<div class="t" style="left:642px;top:386.19px;width:120px;text-align:right;color:#1e1e2a;font-size:11px;">7,92%</div>
<div class="t" style="left:701.6px;top:386.19px;width:120px;text-align:right;color:#1e1e2a;font-size:11px;">$1 882,87</div>
<div class="t" style="left:438px;top:402.79px;width:120px;text-align:right;color:#1e1e2a;font-size:11px;font-weight:bold;-webkit-text-stroke:0;">Sequence:</div>
<div class="t" style="left:516px;top:402.79px;width:120px;text-align:right;color:#1e1e2a;font-size:11px;">39</div>
<div class="t" style="left:592.7px;top:402.79px;width:120px;text-align:right;color:#1e1e2a;font-size:11px;">100,00%</div>
<div class="t" style="left:642px;top:402.79px;width:120px;text-align:right;color:#1e1e2a;font-size:11px;">9,82%</div>
<div class="t" style="left:701.6px;top:402.79px;width:120px;text-align:right;color:#1e1e2a;font-size:11px;">$1 466,38</div>
<div class="btn" style="left:488.6px;top:440.2px;width:159.10000000000002px;height:18.80000000000001px;"><div style="position:absolute;left:0;right:0;top:2.6px;line-height:14px">View Nest</div></div>
<div class="btn" style="left:488.6px;top:466.8px;width:159.10000000000002px;height:18.899999999999977px;"><div style="position:absolute;left:0;right:0;top:2.6px;line-height:14px">Save Combining Run</div></div>
<div class="btn" style="left:655.3px;top:440.2px;width:179.70000000000005px;height:18.80000000000001px;"><div style="position:absolute;left:0;right:0;top:-3px;line-height:12.2px;font-size:10.5px">Run Description: 2024-04-12<br>15:06:48</div></div>
<div class="btn" style="left:655.3px;top:466.8px;width:179.70000000000005px;height:18.899999999999977px;"><div style="position:absolute;left:0;right:0;top:2.6px;line-height:14px">Save Displayed Results &amp; Close</div></div>
<svg style="position:absolute;left:162.8px;top:39.9px" width="8" height="7" viewBox="0 0 8 7"><path d="M0 0L0 6.3L6.8 6.3Z" fill="#9a9aa0"/><path d="M0 0.6h1.2M0 2.6h3.2M0 4.6h5M0 6h6.8" stroke="#76767c" stroke-width="1"/></svg>
<svg style="position:absolute;left:210.2px;top:310.1px" width="8" height="7" viewBox="0 0 8 7"><path d="M0 0L0 6.3L6.8 6.3Z" fill="#9a9aa0"/><path d="M0 0.6h1.2M0 2.6h3.2M0 4.6h5M0 6h6.8" stroke="#76767c" stroke-width="1"/></svg>
<div style="position:absolute;left:0px;top:0px;width:850px;height:22.5px;background:#00407e"></div>
<div style="position:absolute;left:0px;top:22.5px;width:846px;height:2.5px;background:#fbfbfd"></div>
<div style="position:absolute;left:0px;top:31.4px;width:846px;height:1.5px;background:#fbfbfd"></div>
<div style="position:absolute;left:787px;top:10px;width:8.2px;height:1.6px;background:#d4ac2c"></div>
<svg style="position:absolute;left:826px;top:5.7px" width="10" height="10" viewBox="0 0 10 10"><path d="M1.2 1L8.8 8.8M8.8 1L1.2 8.8" stroke="#d4ac2c" stroke-width="1.6"/></svg>
<div style="position:absolute;left:845.8px;top:0px;width:4.2px;height:503px;background:#00407e"></div>
<div style="position:absolute;left:844.8px;top:22.5px;width:1px;height:474px;background:#fbfbfd"></div>
<div style="position:absolute;left:0px;top:495.4px;width:846px;height:1px;background:#fbfbfd"></div>
<div style="position:absolute;left:0px;top:496.4px;width:850px;height:4.2px;background:#00407e"></div>
<div style="position:absolute;left:0px;top:500.6px;width:850px;height:2.4px;background:#f6f6f9"></div>
</body></html>
